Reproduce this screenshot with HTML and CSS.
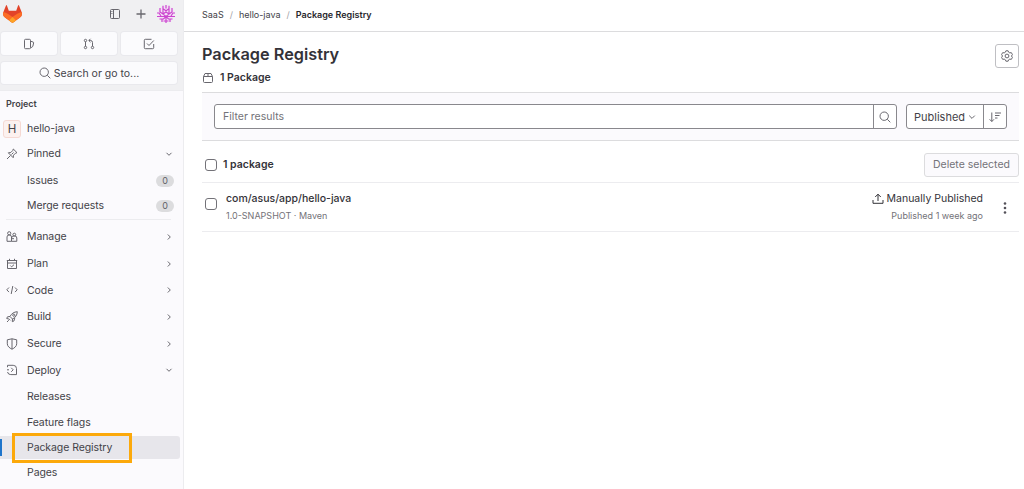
FILE: index.html
```html
<!DOCTYPE html>
<html lang="en">
<head>
<meta charset="utf-8">
<title>Package Registry</title>
<link rel="stylesheet" href="styles.css">
</head>
<body>
<div class="app">
<aside class="sidebar">
  <div class="top">
    <div class="brand">
      <svg class="logo" viewBox="0 0 19 18"><path fill="#e24329" d="M18.6 7.1 16 .4a.5.5 0 0 0-.9 0l-1.9 5.4H5.800L3.900.4a.5.5 0 0 0-.9 0L.4 7.100a4.800 4.800 0 0 0 1.600 5.500L9.500 18l7.500-5.400a4.800 4.800 0 0 0 1.600-5.500z"/><path fill="#fc6d26" d="M.4 7.100c3 .6 5.500 2.300 9.100 5 3.600-2.700 6.100-4.400 9.100-5a4.800 4.800 0 0 1-1.600 5.500L9.500 18 2 12.600A4.800 4.800 0 0 1 .4 7.100z"/><path fill="#fca326" d="m6 15.500 3.500-3.400 3.500 3.400L9.500 18z"/></svg>
      <svg class="i panel" viewBox="0 0 12 12"><rect x="1.500" y="1.500" width="9" height="9" rx="1"/><path d="M4.500 1.500v9M2.400 3.500h1M2.400 5.500h1"/></svg>
      <svg class="i plus" viewBox="0 0 12 12"><path d="M6 1.500v9M1.500 6h9"/></svg>
      <svg class="avatar" viewBox="0 0 18 18"><circle cx="9" cy="9" r="8.500" fill="#f3e2f6"/><path fill="none" stroke="#cc45cf" stroke-width="1.200" d="M6 .8v3l3 2 3-2v-3M9 0v3.500M3 3v4l3 2 3-2 3 2 3-2V3M6 4v5M12 4v5M0 8h2l2 3M18 8h-2l-2 3M0 11.500h18M6 9l3 2.500L12 9M2.500 14h4l2.500-2.500 2.500 2.500h4M5 14v3M13 14v3M9 12v6M6.500 16h5"/></svg>
    </div>
    <div class="counters">
      <div class="tile"><svg class="i" viewBox="0 0 12 12"><path d="M2.500 1.300h4a1 1 0 0 1 1 1v7.400a1 1 0 0 1-1 1h-4a1 1 0 0 1-1-1V2.300a1 1 0 0 1 1-1zM7.500 3.200l2.500.8a.8.8 0 0 1 .6 1L9.900 8a2 2 0 0 1-1 1.200l-1.400.6"/></svg></div>
      <div class="tile"><svg class="i" viewBox="0 0 12 12"><circle cx="2.500" cy="2.500" r="1.200"/><circle cx="2.500" cy="9.500" r="1.200"/><circle cx="9.500" cy="9.500" r="1.200"/><path d="M2.500 3.700v4.600M9.500 8.300V4.500a2 2 0 0 0-2-2H6M7.500.8 5.800 2.500l1.700 1.700"/></svg></div>
      <div class="tile"><svg class="i" viewBox="0 0 12 12"><path d="M8.500 1.300H2.300a1 1 0 0 0-1 1v7.400a1 1 0 0 0 1 1h7.400a1 1 0 0 0 1-1V6M4 5.500l2 2 4.800-5"/></svg></div>
    </div>
    <div class="search"><svg class="i" viewBox="0 0 12 12"><circle cx="5.200" cy="5.200" r="4.200"/><path d="m8.300 8.300 3 3"/></svg><span>Search or go to...</span></div>
  </div>
  <nav class="nav">
    <div class="label">Project</div>
    <div class="row project"><span class="letter">H</span><span>hello-java</span></div>
    <div class="row"><svg class="i lead" viewBox="0 0 12 12"><path d="m7.300 1 3.700 3.700-1.500.5-2 2-.3 2.500-4.900-4.900 2.500-.3 2-2zM4.500 7.500 1 11M5.500 6.500l2-2"/></svg><span>Pinned</span><svg class="i chev" viewBox="0 0 8 8"><path d="M1.500 2.800 4 5.300l2.500-2.500"/></svg></div>
    <div class="row sub"><span>Issues</span><b class="pill">0</b></div>
    <div class="row sub"><span>Merge requests</span><b class="pill">0</b></div>
    <hr class="rule">
    <div class="row main"><svg class="i lead" viewBox="0 0 12 12"><circle cx="3.200" cy="2.300" r="1.600"/><circle cx="8.300" cy="3.600" r="1.400"/><path d="M5.500 10.300H1V6a2 2 0 0 1 2-2h.500a2 2 0 0 1 2 2zM5.500 10.300h5.300V7a2 2 0 0 0-2-2H8a2.400 2.400 0 0 0-2.500 2M5.500 7.700h2.500"/></svg><span>Manage</span><svg class="i chev" viewBox="0 0 8 8"><path d="M2.800 1.500 5.300 4 2.800 6.500"/></svg></div>
    <div class="row main"><svg class="i lead" viewBox="0 0 12 12"><path d="M1.500 2.500h9v8h-9zM.8 2.500h10.400M1.500 5h9M3.500.8v1.700M8.500.8v1.700M4.300 7.500l1.300 1.300L8 6.700"/></svg><span>Plan</span><svg class="i chev" viewBox="0 0 8 8"><path d="M2.800 1.500 5.300 4 2.800 6.500"/></svg></div>
    <div class="row main"><svg class="i lead" viewBox="0 0 12 12"><path d="M3 3.500.8 5.800 3 8.100M9 3.500l2.200 2.300L9 8.100M6.800 2 5.200 10"/></svg><span>Code</span><svg class="i chev" viewBox="0 0 8 8"><path d="M2.800 1.500 5.300 4 2.800 6.500"/></svg></div>
    <div class="row main"><svg class="i lead" viewBox="0 0 12 12"><path d="M4 5.500C5.500 2.500 8 .9 11.300.7 11.200 4 9.500 6.500 6.500 8zM4 5.500 1.500 5.800.7 7.500l2.500.6M6.500 8l-.2 2.700L8 9.900l.8-3.100M3.200 8.100l1.200 1.200M1 11l1.800-1.800"/><circle cx="7.800" cy="4.200" r="1.100"/></svg><span>Build</span><svg class="i chev" viewBox="0 0 8 8"><path d="M2.800 1.500 5.300 4 2.800 6.500"/></svg></div>
    <div class="row main"><svg class="i lead" viewBox="0 0 12 12"><path d="M6 .8 1.300 1.800v4C1.300 8.200 3.500 10 6 11.200c2.500-1.200 4.700-3 4.700-5.400v-4zM6 .8v10.400"/></svg><span>Secure</span><svg class="i chev" viewBox="0 0 8 8"><path d="M2.800 1.500 5.300 4 2.800 6.500"/></svg></div>
    <div class="row main"><svg class="i lead" viewBox="0 0 12 12"><path d="M1.500 3.200V1.300h5.700a3.300 3.300 0 0 1 3.300 3.300v6H4.800A3.300 3.300 0 0 1 1.500 8M1 5.800h2M5.200 3.800l2 2-2 2"/></svg><span>Deploy</span><svg class="i chev" viewBox="0 0 8 8"><path d="M1.500 2.800 4 5.300l2.500-2.500"/></svg></div>
    <div class="row sub first">Releases</div>
    <div class="row sub">Feature flags</div>
    <div class="row sub active"><span class="mark"></span>Package Registry</div>
    <div class="row sub">Pages</div>
  </nav>
</aside>
<main class="content">
  <header class="crumbs"><span>SaaS</span><i>/</i><span>hello-java</span><i>/</i><b>Package Registry</b></header>
  <div class="page">
    <div class="heading">
      <div><h1>Package Registry</h1>
      <div class="count"><svg class="i" viewBox="0 0 12 12"><path d="M3 1.500h6l1.500 3v5a1 1 0 0 1-1 1h-7a1 1 0 0 1-1-1v-5zM1.500 4.500h9M6 1.500v3"/></svg><span>1 Package</span></div></div>
      <button class="gear"><svg class="i" viewBox="0 0 12 12"><path d="M4.900.8h2.200l.5 1.400 1.200.7 1.500-.3 1.100 1.900L10.500 6l.9 1.500-1.100 1.900-1.500-.3-1.200.7-.5 1.400H4.900l-.5-1.400-1.200-.7-1.500.3L.6 7.500 1.500 6 .6 4.500l1.100-1.900 1.500.3 1.200-.7z"/><circle cx="6" cy="6" r="1.900"/></svg></button>
    </div>
    <div class="filter">
      <div class="group field"><span class="placeholder">Filter results</span><span class="end"><svg class="i" viewBox="0 0 12 12"><circle cx="5.200" cy="5.200" r="4.200"/><path d="m8.300 8.300 3 3"/></svg></span></div>
      <div class="group sort"><span class="choice">Published<svg class="i chev" viewBox="0 0 8 8"><path d="M1.200 2.600 4 5.400l2.800-2.800"/></svg></span><span class="end"><svg class="i" viewBox="0 0 12 12"><path d="M2.800 1.500v9M.6 8.300l2.200 2.200L5 8.300M6 2h6M6 4.500h4.500M6 7h2.500"/></svg></span></div>
    </div>
    <div class="listhead"><span class="box"></span><span class="total">1 package</span><button class="delete">Delete selected</button></div>
    <div class="item">
      <span class="box"></span>
      <div class="info"><div class="name">com/asus/app/hello-java</div><div class="meta">1.0-SNAPSHOT · Maven</div></div>
      <div class="status"><div class="pub"><svg class="i" viewBox="0 0 12 12"><path d="M1 7v3.300h10V7M6 8V1.200M3.200 4 6 1.200 8.800 4"/></svg>Manually Published</div><div class="meta">Published 1 week ago</div></div>
      <svg class="dots" viewBox="0 0 4 12"><circle cx="2" cy="1.500" r="1.300"/><circle cx="2" cy="6" r="1.300"/><circle cx="2" cy="10.500" r="1.300"/></svg>
    </div>
  </div>
</main>
</div>
<div class="callout"></div>
</body>
</html>
```
FILE: styles.css
```css
* { box-sizing: border-box; }
body { margin: 0; font-family: Inter, sans-serif; font-size: 10.500px; color: #434248; background: #fff; overflow: hidden; }
button { font: inherit; padding: 0; }
.app { display: flex; height: 489px; }
.i { width: 12px; height: 12px; fill: none; stroke: #68676e; stroke-width: 1; flex: none; }
.sidebar { width: 184px; flex: none; background: #fbfafd; border-right: 1px solid #ececef; overflow: hidden; }
.top { height: 91px; background: #f0f0f2; border-bottom: 1px solid #ececef; }
.brand { height: 32px; display: flex; align-items: center; padding: 0 9px 4px 3px; }
.logo { width: 19px; height: 18px; margin-right: auto; }
.panel { margin-right: 14px; }
.plus { margin-right: 10px; stroke-width: 1.3; }
.avatar { width: 18px; height: 18px; margin-right: -1px; }
.counters { display: flex; gap: 4px; padding-left: 1px; height: 23px; }
.tile, .search { background: #fbfbfd; border-radius: 3px; display: flex; align-items: center; justify-content: center; box-shadow: 0 0 0 1px #e9e9ed; }
.tile { width: 56px; }
.search { margin: 7px 0 0 1px; width: 176px; height: 22px; gap: 3px; }
.nav { letter-spacing: -0.08px; }
.label { font-size: 9px; font-weight: 600; padding: 7px 0 0 6px; height: 25px; line-height: 12px; letter-spacing: 0; }
.row { display: flex; align-items: center; height: 25.300px; padding-left: 6px; padding-right: 10px; white-space: nowrap; }
.lead { margin-right: 9px; }
.chev { width: 8px; height: 8px; margin-left: auto; }
.project { padding-left: 3px; }
.letter { width: 18px; height: 18px; background: #fcf1ef; border: 1px solid #f5d9d3; border-radius: 3px; display: flex; align-items: center; justify-content: center; margin-right: 6px; font-size: 11.500px; }
.sub { padding-left: 27px; padding-right: 9px; }
.pill { margin-left: auto; width: 18px; height: 12px; border-radius: 6px; background: #dcdcde; color: #626168; font-weight: 400; font-size: 9px; display: flex; align-items: center; justify-content: center; }
.project + .row { margin-bottom: 1.300px; }
.rule { border: 0; border-top: 1px solid #ececef; margin: 1px 12px 3px 6px; }
.main { height: 26.700px; }
.first { margin-top: 0.700px; }
.active { position: relative; background: #e7e6eb; height: 23.300px; margin: 1px 3px 1px 0; border-radius: 0 3px 3px 0; }
.mark { position: absolute; left: 0; top: 3px; width: 2px; height: 17px; background: #1f75cb; }
.callout { position: absolute; left: 12px; top: 433px; width: 120px; height: 30px; border: 3px solid #fca90b; }
.content { flex: 1; min-width: 0; }
.crumbs { height: 32px; border-bottom: 1px solid #dcdcde; padding: 0 0 3px 18px; display: flex; align-items: center; font-size: 9px; }
.crumbs i { font-style: normal; color: #a4a3a8; margin: 0 6px; }
.crumbs b { font-weight: 600; color: #28272d; }
.page { padding: 0 5px 0 18px; }
.heading { display: flex; justify-content: space-between; height: 60px; padding-top: 12px; }
h1 { margin: 0; font-size: 16.300px; font-weight: 600; line-height: 20px; color: #333238; }
.count { display: flex; align-items: center; gap: 6px; font-weight: 600; line-height: 14px; margin-top: 7px; color: #333238; }
.gear { width: 24px; height: 24px; border: 1px solid #bfbfc3; border-radius: 3px; background: #fff; display: flex; align-items: center; justify-content: center; }
.filter { display: flex; gap: 9px; height: 49px; padding: 11px 12px; background: #fbfafd; border-top: 1px solid #dcdcde; border-bottom: 1px solid #dcdcde; }
.group { display: flex; height: 25px; border: 1px solid #89888d; border-radius: 3px; background: #fff; }
.field { flex: 1; }
.placeholder { flex: 1; padding-left: 8px; line-height: 23px; color: #737278; }
.end { width: 23px; border-left: 1px solid #89888d; display: flex; align-items: center; justify-content: center; }
.sort { width: 101px; font-size: 11px; }
.choice { flex: 1; display: flex; align-items: center; padding: 0 7px; }
.listhead { height: 42px; border-bottom: 1px solid #ececef; display: flex; align-items: center; padding: 6px 0 0 3px; }
.box { width: 12px; height: 12px; border: 1px solid #737278; border-radius: 3px; flex: none; }
.total { font-weight: 600; margin-left: 6px; color: #333238; }
.delete { margin-left: auto; width: 95px; height: 24px; color: #737278; background: #fbfafd; border: 1px solid #dcdcde; border-radius: 3px; }
.item { height: 49px; border-bottom: 1px solid #ececef; display: flex; padding: 0 12px 0 3px; }
.item .box { margin-top: 15px; }
.info { margin-left: 9px; padding-top: 8px; }
.name { font-weight: 500; color: #333238; }
.name, .pub { line-height: 16px; }
.meta { font-size: 9px; line-height: 18px; color: #737278; }
.status { margin-left: auto; padding-top: 8px; text-align: right; }
.pub { display: flex; align-items: center; gap: 3px; color: #333238; }
.pub .i { stroke: #333238; }
.dots { width: 4px; height: 12px; margin: 19px 0 0 20px; fill: #535158; }
```
